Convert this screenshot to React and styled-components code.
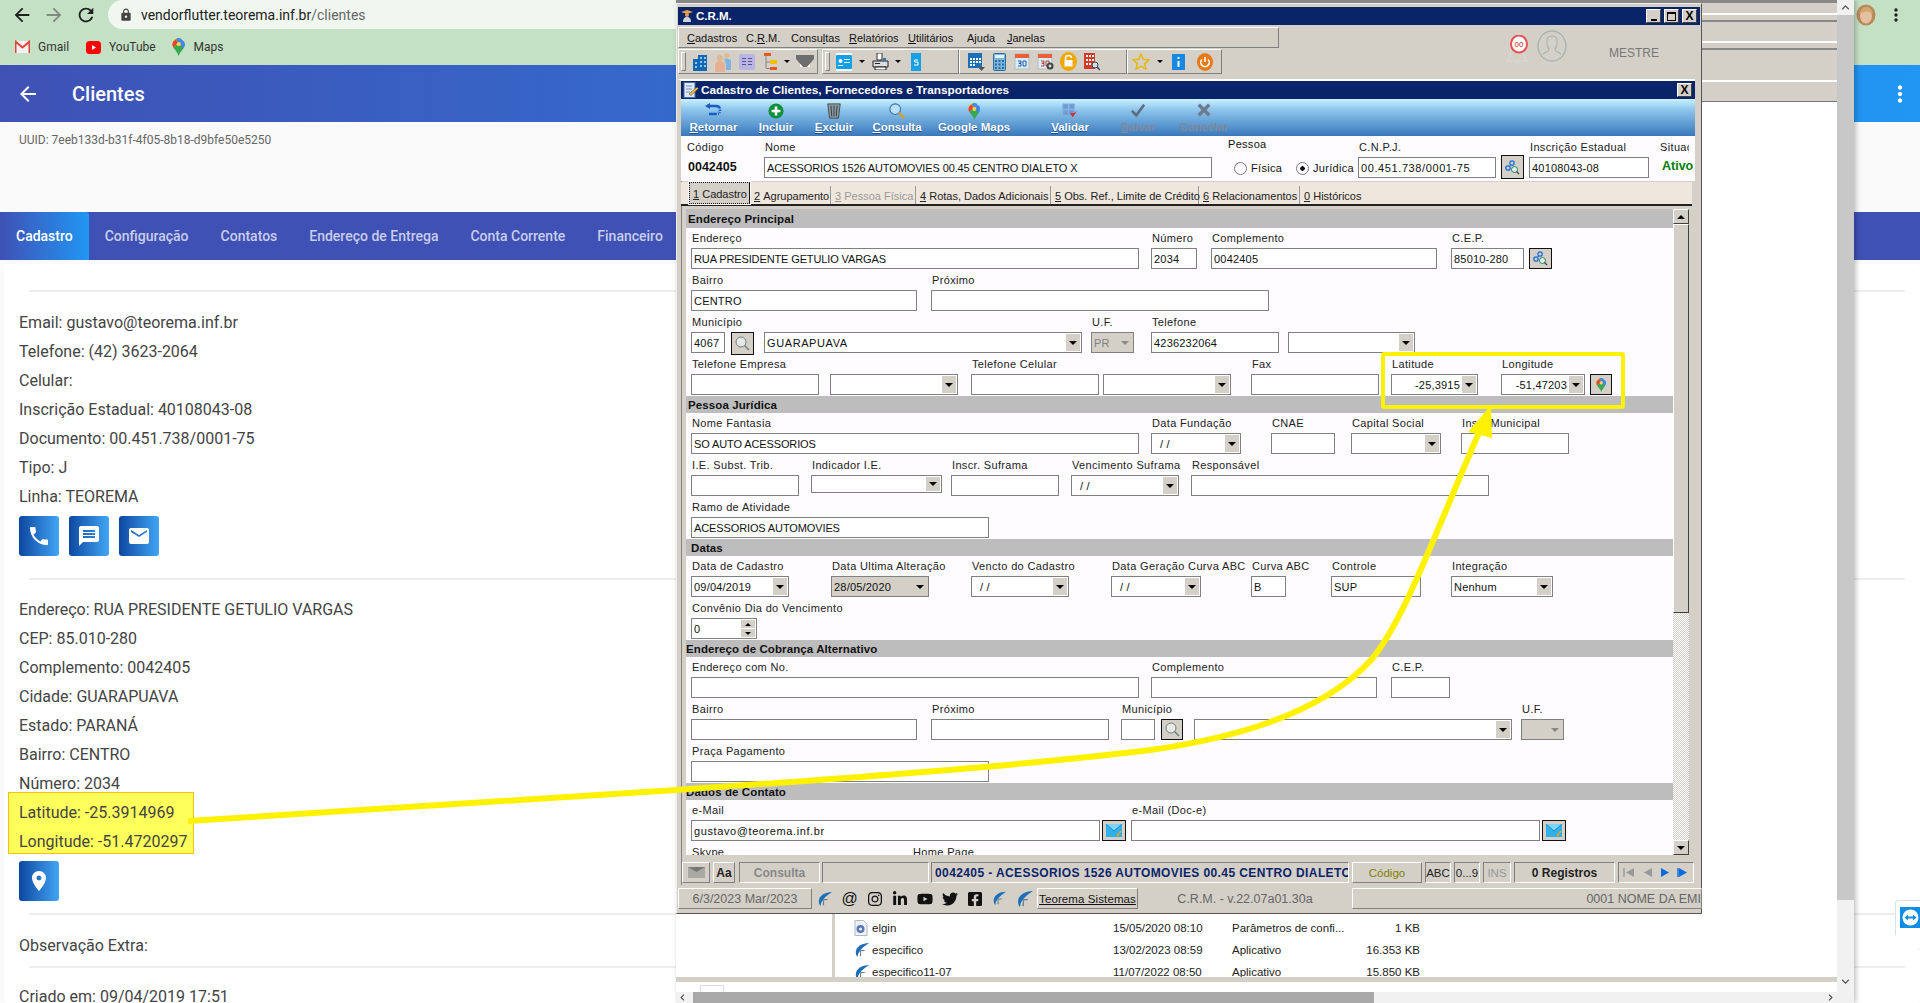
import React from "react";
import styled, { createGlobalStyle } from "styled-components";
import {
  MdArrowBack,
  MdArrowForward,
  MdRefresh,
  MdLock,
  MdMoreVert,
  MdPhone,
  MdMessage,
  MdEmail,
  MdPlace,
  MdKeyboardArrowUp,
  MdKeyboardArrowDown,
  MdKeyboardArrowLeft,
  MdKeyboardArrowRight,
} from "react-icons/md";
import { FaInstagram, FaLinkedinIn, FaYoutube, FaTwitter, FaFacebookSquare } from "react-icons/fa";

const GlobalStyle = createGlobalStyle`
  html, body {
    margin: 0;
    padding: 0;
    overflow: hidden;
    background: #fafafa;
  }
  * {
    box-sizing: border-box;
  }
`;

const Desktop = styled.div`
  position: relative;
  width: 1920px;
  height: 1003px;
  overflow: hidden;
  font-family: Roboto, "Liberation Sans", sans-serif;
`;

/* ---------- browser page ---------- */

const ChromeBar = styled.div`
  height: 65px;
  background: #c5e1c5;
  display: flex;
  flex-direction: column;
`;

const ChromeRow = styled.div`
  height: 29px;
  display: flex;
  align-items: center;
  padding-left: 11px;
  color: #222;
`;

const NavSlot = styled.span`
  width: 32px;
  display: flex;
  font-size: 22px;
  color: ${(p) => (p.$dim ? "#7d8a7d" : "#1f1f1f")};
`;

const UrlPill = styled.div`
  flex: 1;
  height: 29px;
  margin-left: 1px;
  background: #f0f7f0;
  border-radius: 15px;
  display: flex;
  align-items: center;
  padding-left: 11px;
  font-size: 14px;
  color: #222;
  svg {
    color: #444;
    margin-right: 8px;
    font-size: 14px;
  }
  span {
    color: #666;
  }
`;

const ChromeEnd = styled.div`
  width: 66px;
  display: flex;
  align-items: center;
  padding-left: 2px;
  color: #222;
  font-size: 20px;
  svg:last-child {
    margin-left: 10px;
  }
`;

const Bookmarks = styled.div`
  display: flex;
  align-items: center;
  height: 36px;
  padding-left: 15px;
  font-size: 12px;
  color: #333;
`;

const Bookmark = styled.div`
  width: ${(p) => p.$w}px;
  display: flex;
  align-items: center;
  gap: 8px;
`;

const AppBar = styled.div`
  height: 57px;
  background: linear-gradient(90deg, #3f51b5, #2196f3);
  display: flex;
  align-items: center;
  padding-left: 16px;
  color: #fff;
  position: relative;
`;

const BackIcon = styled(MdArrowBack)`
  font-size: 24px;
  margin-right: 32px;
`;

const AppTitle = styled.div`
  font-size: 20px;
  font-weight: 500;
  flex: 1;
`;

const AppMenu = styled(MdMoreVert)`
  font-size: 26px;
  margin-right: 7px;
`;

const UuidBox = styled.div`
  height: 90px;
  padding: 11px 19px;
  background: #fafafa;
  font-size: 12px;
  line-height: 14px;
  color: #666;
`;

const TabBar = styled.div`
  height: 48px;
  background: #3f51b5;
  display: flex;
`;

const Tab = styled.div`
  padding: 0 16px;
  display: flex;
  align-items: center;
  font-size: 14px;
  font-weight: 500;
  color: ${(p) => (p.$active ? "#fff" : "rgba(255,255,255,.72)")};
  background: ${(p) => (p.$active ? "linear-gradient(90deg,#3f51b5,#2196f3)" : "none")};
  border-top-right-radius: 3px;
`;

const Card = styled.div`
  margin: 4px 0 0 4px;
  height: 739px;
  background: #fff;
  border-radius: 4px;
  padding: 26px 15px 0;
  color: #444;
  font-size: 16px;
`;

const Rule = styled.div`
  height: 2px;
  background: #eee;
  margin: ${(p) => p.$top}px 0 ${(p) => p.$bottom}px 10px;
`;

const InfoLine = styled.div`
  height: 29px;
  line-height: 29px;
  position: relative;
  z-index: 1;
`;

const Highlight = styled.div`
  position: relative;
  &::before {
    content: "";
    position: absolute;
    left: -11px;
    top: -6px;
    width: 184px;
    height: 60px;
    background: #ffff5c;
    border: 1px solid #f4c20d;
  }
`;

const ActionRow = styled.div`
  display: flex;
  gap: 10px;
  margin-top: 5px;
`;

const ActionButton = styled.div`
  width: 40px;
  height: 40px;
  border-radius: 3px;
  background: linear-gradient(90deg, #0d47a1, #42a5f5);
  color: #fff;
  font-size: 24px;
  display: flex;
  align-items: center;
  justify-content: center;
`;

const TeamTab = styled.div`
  position: absolute;
  right: 0;
  top: 900px;
  width: 25px;
  height: 50px;
  background: #fff;
  border: 1px solid #cfe3f5;
  border-right: none;
  border-radius: 3px 0 0 0;
  clip-path: polygon(0 0, 100% 0, 100% 100%, 0 70%);
  padding: 6px 0 0 4px;
`;

const TeamSquare = styled.div`
  width: 21px;
  height: 21px;
  background: #0e8ee9;
  display: flex;
  align-items: center;
  justify-content: center;
`;

/* ---------- explorer behind the C.R.M. window ---------- */

const Explorer = styled.div`
  position: absolute;
  left: 676px;
  top: 0;
  width: 1178px;
  height: 1003px;
  z-index: 1;
  display: flex;
  background: #fff;
  box-shadow: 2px 0 5px rgba(0, 0, 0, 0.25);
`;

const ExplorerMain = styled.div`
  flex: 1;
  display: flex;
  flex-direction: column;
  min-width: 0;
`;

const ExplorerBands = styled.div`
  height: 102px;
  background: #d4d0c8;
  border-top: 3px solid #888;
  border-bottom: 1px solid #777;
  display: flex;
  flex-direction: column;
  justify-content: flex-start;
`;

const BandLine = styled.div`
  height: 2px;
  background: ${(p) => p.$c};
  margin-top: ${(p) => p.$top}px;
`;

const ExplorerBody = styled.div`
  flex: 1;
  display: flex;
  align-items: flex-end;
  overflow: hidden;
`;

const ExplorerPane = styled.div`
  width: 159px;
  height: 100%;
  border-right: 3px solid #d4d0c8;
  flex: none;
`;

const FileList = styled.div`
  flex: 1;
  margin-bottom: -6px;
`;

const FileRow = styled.div`
  height: 22px;
  display: flex;
  align-items: center;
  font-family: "Liberation Sans", sans-serif;
  font-size: 11.5px;
  color: #222;
  padding-left: 19px;
`;

const FileName = styled.div`
  width: 259px;
  display: flex;
  align-items: center;
`;

const FileIcon = styled.div`
  width: 18px;
  flex: none;
  display: flex;
`;

const FileDate = styled.div`
  width: 119px;
`;

const FileType = styled.div`
  width: 120px;
`;

const FileSize = styled.div`
  width: 68px;
  text-align: right;
`;

const ExplorerHScroll = styled.div`
  height: 5px;
  background: #d4d0c8;
  flex: none;
`;

const ExplorerGap = styled.div`
  height: 10px;
  background: #fff;
  flex: none;
  padding: 3px 0 0 24px;
  overflow: hidden;
`;

const CutPage = styled.div`
  width: 24px;
  height: 12px;
  border: 1px solid #ddd;
  border-bottom: none;
`;

const BrowserHScroll = styled.div`
  height: 11px;
  background: #f1f1f1;
  flex: none;
  display: flex;
  align-items: center;
  color: #444;
  font-size: 13px;
`;

const HThumb = styled.div`
  height: 11px;
  width: 681px;
  margin-left: 4px;
  background: #a8a8a8;
`;

const HSpacer = styled.div`
  flex: 1;
`;

const ExplorerVScroll = styled.div`
  width: 17px;
  background: #f1f1f1;
  display: flex;
  flex-direction: column;
  align-items: center;
  flex: none;
  color: #555;
  font-size: 15px;
  padding-bottom: 12px;
`;

const VThumb = styled.div`
  width: 100%;
  height: 885px;
  background: #c8c8c8;
  margin-bottom: 74px;
`;

/* ---------- C.R.M. window ---------- */

const CrmWindow = styled.div`
  position: absolute;
  left: 676px;
  top: 3px;
  width: 1026px;
  height: 911px;
  z-index: 2;
  background: #d4d0c8;
  border: 1px solid #555;
  border-top-color: #eee;
  border-left-color: #eee;
  padding: 3px 1px 0 1px;
  display: flex;
  flex-direction: column;
  font-family: "Liberation Sans", Arial, sans-serif;
  font-size: 11px;
  color: #111;
`;

const TitleBar = styled.div`
  height: ${(p) => p.$h}px;
  flex: none;
  background: #0a246a;
  color: #fff;
  font-weight: 700;
  font-size: ${(p) => p.$size}px;
  display: flex;
  align-items: center;
  padding: 0 ${(p) => p.$right}px 0 2px;
  gap: 2px;
`;

const TitleSpacer = styled.div`
  flex: 1;
`;

const CaptionButton = styled.div`
  width: 15px;
  height: 14px;
  margin-left: 1px;
  background: #d4d0c8;
  border: 1px solid;
  border-color: #fff #404040 #404040 #fff;
  display: flex;
  align-items: center;
  justify-content: center;
  color: #000;
  font-size: 12px;
  font-weight: 700;
  line-height: 1;
`;

const MaxGlyph = styled.div`
  width: 9px;
  height: 9px;
  border: 1px solid #000;
  border-top-width: 2px;
`;

const MinGlyph = styled.div`
  width: 6px;
  height: 2px;
  background: #000;
  margin-top: 7px;
`;

const CrmHeader = styled.div`
  height: 47px;
  margin: 2px 0 5px;
  flex: none;
  display: flex;
`;

const BarsColumn = styled.div`
  width: 601px;
  display: flex;
  flex-direction: column;
`;

const MenuBar = styled.div`
  height: 21px;
  display: flex;
  align-items: center;
  padding-left: 8px;
  border: 1px solid;
  border-color: #fff #808080 #808080 #fff;
  font-size: 11px;
`;

const MenuItem = styled.div`
  width: ${(p) => p.$w}px;
  flex: none;
`;

const ToolStrip = styled.div`
  height: 25px;
  margin-top: 1px;
  display: flex;
`;

const ToolGroup = styled.div`
  position: relative;
  width: ${(p) => p.$w}px;
  margin-left: ${(p) => p.$ml || 0}px;
  flex: none;
  display: flex;
  align-items: center;
  padding-left: ${(p) => p.$pad}px;
  border: 1px solid;
  border-color: #fff #808080 #808080 #fff;
  &::before {
    content: ${(p) => (p.$grip ? '""' : "none")};
    position: absolute;
    left: 2px;
    top: 2px;
    bottom: 2px;
    width: 3px;
    border: 1px solid;
    border-color: #fff #808080 #808080 #fff;
  }
`;

const ToolSlot = styled.div`
  width: ${(p) => p.$w}px;
  flex: none;
  display: flex;
  align-items: center;
  justify-content: center;
`;

const Caret = styled.div`
  width: 0;
  height: 0;
  border-left: 3px solid transparent;
  border-right: 3px solid transparent;
  border-top: 3px solid #000;
`;

const UserArea = styled.div`
  flex: 1;
  display: flex;
  align-items: flex-start;
  padding: 8px 0 0 224px;
`;

const RingSlot = styled.div`
  margin: -5px 0 0 6px;
`;

const Mestre = styled.div`
  margin: 11px 0 0 42px;
  font-size: 12px;
  color: #777;
`;

const InnerWindow = styled.div`
  height: 806px;
  margin-right: 5px;
  flex: none;
  border-top: 2px solid #fff;
  border-left: 3px solid #d4d0c8;
  box-shadow: inset 1px 0 #808080;
  display: flex;
  flex-direction: column;
  background: #d4d0c8;
`;

const ActionBar = styled.div`
  height: 37px;
  flex: none;
  display: flex;
  background: linear-gradient(180deg, #c8f0ff 0%, #8cc4ec 30%, #3a78bc 100%);
`;

const ActionItem = styled.div`
  width: ${(p) => p.$w}px;
  flex: none;
  display: flex;
  flex-direction: column;
  align-items: center;
  font-weight: 700;
  font-size: 11.5px;
  line-height: 14px;
  padding-top: 4px;
  color: ${(p) => (p.$off ? "#7e8a98" : "#fff")};
  text-shadow: ${(p) => (p.$off ? "none" : "0 1px 1px rgba(0,30,80,.5)")};
`;

const ActionIcon = styled.div`
  height: 17px;
`;

const HeadRow = styled.div`
  height: 45px;
  flex: none;
  background: #fffcff;
  display: flex;
  padding: 1px 0 0 5px;
  overflow: hidden;
`;

const Field = styled.div`
  width: ${(p) => p.$w}px;
  margin-left: ${(p) => p.$ml || 0}px;
  flex: none;
`;

const FieldLabel = styled.div`
  height: 20px;
  line-height: 21px;
  padding-left: 1px;
  white-space: nowrap;
  letter-spacing: 0.35px;
  color: #222;
  overflow: ${(p) => (p.$clip ? "hidden" : "visible")};
`;

const spacing = { tight: "-0.12px", wide: "0.6px" };

const InputBox = styled.div`
  height: ${(p) => p.$h || 21}px;
  border: 1px solid #808080;
  background: ${(p) => (p.$off ? "#d4d0c8" : "#fff")};
  display: flex;
  align-items: center;
  padding: 0 1px 0 2px;
  white-space: nowrap;
  overflow: hidden;
  letter-spacing: ${(p) => spacing[p.$spread] || "0.2px"};
  color: ${(p) => (p.$muted ? "#808080" : "#111")};
`;

const InputText = styled.div`
  flex: 1;
  text-align: ${(p) => (p.$right ? "right" : "left")};
  padding-right: ${(p) => (p.$right ? "2px" : "0")};
  padding-left: ${(p) => p.$indent || 0}px;
`;

const DropArrow = styled.div`
  width: 14px;
  align-self: stretch;
  margin: 1px 0;
  background: ${(p) => (p.$flat ? "transparent" : "#d4d0c8")};
  display: flex;
  align-items: center;
  justify-content: center;
  flex: none;
  &::after {
    content: "";
    border-left: 4px solid transparent;
    border-right: 4px solid transparent;
    border-top: 4px solid ${(p) => (p.$grey ? "#888" : "#000")};
  }
`;

const Spinner = styled.div`
  width: 14px;
  align-self: stretch;
  flex: none;
  display: flex;
  flex-direction: column;
  gap: 1px;
  margin: 1px 0;
`;

const SpinPart = styled.div`
  flex: 1;
  background: #d4d0c8;
  display: flex;
  align-items: center;
  justify-content: center;
  &::after {
    content: "";
    border-left: 3px solid transparent;
    border-right: 3px solid transparent;
    ${(p) => (p.$up ? "border-bottom: 3px solid #000;" : "border-top: 3px solid #000;")}
  }
`;

const IconButton = styled.div`
  height: ${(p) => p.$h || 21}px;
  margin-top: ${(p) => p.$top || 0}px;
  background: #d4d0c8;
  border: 1px solid #111;
  display: flex;
  align-items: center;
  justify-content: center;
`;

const Radio = styled.div`
  display: flex;
  align-items: center;
  gap: 4px;
  width: ${(p) => p.$w}px;
  letter-spacing: 0.3px;
  &::before {
    content: "";
    width: 11px;
    height: 11px;
    border-radius: 50%;
    border: 1px solid #777;
    background: ${(p) => (p.$on ? "radial-gradient(circle,#111 0 2px,#fff 2.5px)" : "#fff")};
  }
`;

const RadioRow = styled.div`
  display: flex;
  margin-top: 6px;
  padding-left: 6px;
  height: 16px;
`;

const PersonLabel = styled.div`
  height: 17px;
  line-height: 14px;
  letter-spacing: 0.3px;
`;

const StatusText = styled.div`
  color: #008000;
  font-weight: 700;
  font-size: 12.5px;
  padding: 2px 0 0 3px;
  white-space: nowrap;
`;

const CodeValue = styled.div`
  font-weight: 700;
  font-size: 12.5px;
  padding: 3px 0 0 2px;
`;

const TabStrip = styled.div`
  height: 24px;
  margin-top: 1px;
  flex: none;
  background: #efe7de;
  border-bottom: 2px solid #222;
  display: flex;
  align-items: flex-end;
  padding: 0 0 0 8px;
  font-size: 11px;
  margin-right: 3px;
`;

const FormTab = styled.div`
  width: ${(p) => p.$w}px;
  height: ${(p) => (p.$active ? "22px" : "18px")};
  flex: none;
  display: flex;
  align-items: center;
  padding: 2px 0 0 ${(p) => (p.$active ? "3px" : "4px")};
  white-space: nowrap;
  color: ${(p) => (p.$off ? "#999" : "#222")};
  border: ${(p) => (p.$active ? "1px dotted #111" : "none")};
  border-right: ${(p) => (p.$active ? "1px solid #111" : p.$last ? "none" : "1px solid #999")};
  background: ${(p) => (p.$active ? "#d4d0c8" : "transparent")};
  outline: ${(p) => (p.$active ? "1px solid #fff" : "none")};
`;

const FormArea = styled.div`
  height: 651px;
  flex: none;
  display: flex;
  padding: 3px 6px 0 5px;
`;

const FormScroll = styled.div`
  flex: 1;
  height: 646px;
  overflow: hidden;
  background: #fffcff;
`;

const SectionBand = styled.div`
  height: ${(p) => p.$h || 17}px;
  padding-left: ${(p) => p.$pad}px;
  background: #bdbdbd;
  display: flex;
  align-items: center;
  font-weight: 700;
  font-size: 11.5px;
  letter-spacing: 0.1px;
  color: #111;
`;

const FormRow = styled.div`
  height: 42px;
  padding-left: 5px;
  display: flex;
`;

const VScroll = styled.div`
  width: 16px;
  height: 646px;
  flex: none;
  display: flex;
  flex-direction: column;
  background: repeating-conic-gradient(#d4d0c8 0 25%, #fff 0 50%) 0 0 / 2px 2px;
`;

const VScrollButton = styled.div`
  height: 15px;
  flex: none;
  background: #d4d0c8;
  border: 1px solid;
  border-color: #fff #404040 #404040 #fff;
  display: flex;
  align-items: center;
  justify-content: center;
  &::after {
    content: "";
    border-left: 4px solid transparent;
    border-right: 4px solid transparent;
    ${(p) => (p.$up ? "border-bottom: 4px solid #000;" : "border-top: 4px solid #000;")}
  }
`;

const VScrollThumb = styled.div`
  height: 389px;
  flex: none;
  background: #d4d0c8;
  border: 1px solid;
  border-color: #fff #404040 #404040 #fff;
  margin-bottom: auto;
`;

const RecordBar = styled.div`
  height: 21px;
  margin-top: 5px;
  padding-left: 1px;
  flex: none;
  display: flex;
`;

const RecordCell = styled.div`
  width: ${(p) => p.$w}px;
  margin-left: ${(p) => p.$ml || 0}px;
  flex: none;
  border: 1px solid;
  border-color: ${(p) => (p.$raised ? "#fff #808080 #808080 #fff" : "#808080 #fff #fff #808080")};
  display: flex;
  align-items: center;
  justify-content: center;
  white-space: nowrap;
  overflow: hidden;
  font-size: ${(p) => p.$size || 11.5}px;
  font-weight: ${(p) => (p.$bold ? 700 : 400)};
  color: ${(p) => p.$color || "#222"};
`;

const RecordName = styled(RecordCell)`
  justify-content: flex-start;
  padding-left: 3px;
  letter-spacing: 0.4px;
`;

const NavGlyph = styled.div`
  width: 18px;
  display: flex;
  justify-content: center;
`;

const FootBar = styled.div`
  height: 21px;
  margin-top: 3px;
  flex: none;
  display: flex;
  align-items: center;
  font-size: 12.5px;
  color: #666;
`;

const FootCell = styled.div`
  width: ${(p) => p.$w}px;
  height: 21px;
  flex: none;
  border: 1px solid;
  border-color: ${(p) => (p.$flat ? "transparent" : "#fff #808080 #808080 #fff")};
  display: flex;
  align-items: center;
  justify-content: ${(p) => p.$align || "center"};
  white-space: nowrap;
  overflow: hidden;
`;

const SocialSlot = styled.div`
  width: 25px;
  flex: none;
  display: flex;
  justify-content: center;
  color: #111;
  font-size: 16px;
`;

const TeoremaLink = styled.div`
  color: #111;
  text-decoration: underline;
  font-size: 11.5px;
  letter-spacing: 0.1px;
`;

const Annotation = styled.svg`
  position: absolute;
  left: 0;
  top: 0;
  z-index: 3;
  pointer-events: none;
`;

/* ---------- drawings ---------- */

const Gmail = () => (
  <svg width="15" height="14" viewBox="0 0 15 14">
    <rect x="0.5" y="1" width="14" height="12" fill="#f4f4f4" />
    <path d="M0.5 13V1.5L7.5 7.5L14.5 1.5V13" fill="none" stroke="#e8433a" strokeWidth="2" />
  </svg>
);

const YouTube = () => (
  <svg width="15" height="13" viewBox="0 0 15 13">
    <rect width="15" height="13" rx="3.5" fill="#f00" />
    <path d="M6 4L10 6.5L6 9Z" fill="#fff" />
  </svg>
);

const MapsPin = ({ size = 20 }) => (
  <svg width={size * 0.75} height={size} viewBox="0 0 15 20">
    <path d="M7.5 0C3.4 0 0.5 3 0.5 7C0.5 8.5 1 9.7 1.6 10.7L11 2Q9.5 0 7.5 0Z" fill="#f4b400" />
    <path d="M1.6 10.7L7 5.5L3.8 2Q0.5 4 0.5 7C0.5 8.5 1 9.7 1.6 10.7Z" fill="#ea4335" />
    <path d="M4 2Q5.5 0 7.5 0Q10 0 11.5 2.5L9 5Q8 4 7 4.5Z" fill="#4285f4" />
    <path d="M11.3 2.3Q14.5 4 14.5 7C14.5 9 13.5 10.5 12.5 12L8 7.5Q9.5 6 9 5Z" fill="#4285f4" />
    <path d="M1.6 10.7L6 6.5Q7 9 9.5 7L12.5 12C10.5 14.5 8.5 16.5 7.5 20C6.5 16.5 4 14 1.6 10.7Z" fill="#34a853" />
    <circle cx="7.5" cy="7" r="2.3" fill="#fbd34d" />
  </svg>
);

const Avatar = () => (
  <svg width="20" height="22" viewBox="0 0 20 22">
    <ellipse cx="10" cy="11" rx="9.5" ry="10.5" fill="#b88a5a" />
    <ellipse cx="10" cy="12" rx="6" ry="7.5" fill="#e6c0a0" />
    <path d="M3 10Q5 2 12 3Q16 5 17 10Q12 5 3 10Z" fill="#d0a870" />
  </svg>
);

const Swoosh = ({ size = 18 }) => (
  <svg width={size} height={size} viewBox="0 0 18 18">
    <path d="M17 1C9 1 2 5 2 12Q2 15 4 17Q4 9 17 1Z" fill="#1d6fb8" />
    <path d="M7 9H12V10L8 10.5V16H6.5Z" fill="#6d7f8e" />
  </svg>
);

const CrmLogo = () => (
  <svg width="14" height="14" viewBox="0 0 14 14">
    <path d="M1 3L7 1L13 3L7 5Z" fill="#e8a040" />
    <circle cx="7" cy="6" r="2" fill="#d89868" />
    <path d="M3 13Q3 8 7 8Q11 8 11 13Z" fill="#ccd4dc" />
  </svg>
);

const DocPen = () => (
  <svg width="16" height="16" viewBox="0 0 16 16">
    <rect x="1" y="0.5" width="11" height="15" fill="#dfe8f6" stroke="#4868a8" />
    <path d="M3 4h6M3 7h6M3 10h4" stroke="#7890c0" />
    <path d="M6 12L14 5L15.5 6.5L8 13.5Z" fill="#f0c040" stroke="#333" strokeWidth="0.5" />
  </svg>
);

const Building = () => (
  <svg width="14" height="18" viewBox="0 0 14 18">
    <path d="M0 6H5V2H14V18H0Z" fill="#1268b4" />
    <path d="M7 4h2v2H7zM11 4h2v2h-2zM7 8h2v2H7zM11 8h2v2h-2zM7 12h2v2H7zM11 12h2v2h-2zM2 9h2v2H2zM2 13h2v2H2z" fill="#8cc8f0" />
  </svg>
);

const People = () => (
  <svg width="18" height="20" viewBox="0 0 18 20">
    <circle cx="6" cy="6" r="3" fill="#e0b890" />
    <circle cx="13" cy="3.5" r="2.5" fill="#e0b890" />
    <path d="M1 20V12Q2 9 6 9Q10 9 11 12V20Z" fill="#e8b090" />
    <path d="M10 7Q13 5.5 17 8V18H12V12Z" fill="#80b4e0" />
  </svg>
);

const ListWindow = () => (
  <svg width="16" height="16" viewBox="0 0 16 16">
    <rect width="16" height="16" rx="2" fill="#b8b4e4" />
    <path d="M3 4h4v1H3zM9 4h4v1H9zM3 7h4v1H3zM9 7h4v1H9zM3 10h4v1H3zM9 10h4v1H9z" fill="#55558c" />
  </svg>
);

const TreeIcon = () => (
  <svg width="13" height="18" viewBox="0 0 13 18">
    <rect x="0" y="0" width="7" height="3" fill="#e85a20" />
    <rect x="6" y="7" width="7" height="4" fill="#f4c000" />
    <rect x="6" y="14" width="7" height="3" fill="#e85a20" />
    <path d="M2 3V15.5H6M2 9H6" fill="none" stroke="#888" />
  </svg>
);

const GreyMail = () => (
  <svg width="18" height="14" viewBox="0 0 18 14">
    <path d="M0 0H18V4L11 12H7L0 4Z" fill="#6e6e6e" />
    <path d="M7 12H11L14 9V12H4V9Z" fill="#fff" />
  </svg>
);

const CardIcon = () => (
  <svg width="16" height="18" viewBox="0 0 16 18">
    <rect width="16" height="18" fill="#fff" />
    <rect y="2" width="16" height="14" rx="1" fill="#12a0e8" />
    <circle cx="4.5" cy="8" r="2" fill="#fff" />
    <path d="M8 6h6v1H8zM8 9h6v1H8zM2 12h5v1H2z" fill="#fff" />
  </svg>
);

const Printer = () => (
  <svg width="17" height="17" viewBox="0 0 17 17">
    <path d="M5 0H10V7H5Z" fill="#fff" stroke="#333" />
    <path d="M1 8H16V14H1Z" fill="#ddd" stroke="#222" />
    <path d="M3 14H14V17H3Z" fill="#fff" stroke="#222" />
    <path d="M11 5H14V8H11Z" fill="#2a7ab8" />
    <path d="M3 10h5v1H3z" fill="#222" />
  </svg>
);

const BlueDoc = () => (
  <svg width="10" height="18" viewBox="0 0 10 18">
    <rect width="10" height="18" fill="#18a0e4" />
    <path d="M7 7H3.5V9H7V12H3" fill="none" stroke="#fff" />
  </svg>
);

const CalendarBlue = () => (
  <svg width="17" height="18" viewBox="0 0 17 18">
    <rect width="14" height="15" fill="#1a70b8" />
    <path d="M2 5h2v2H2zM5 5h2v2H5zM8 5h2v2H8zM11 5h2v2h-2zM2 8h2v2H2zM5 8h2v2H5zM8 8h2v2H8zM11 8h2v2h-2zM2 11h2v2H2zM5 11h2v2H5z" fill="#fff" />
    <path d="M10 14H17L13.5 18Z" fill="#555" />
  </svg>
);

const Calculator = () => (
  <svg width="13" height="18" viewBox="0 0 13 18">
    <rect x="0.5" y="0.5" width="12" height="17" rx="1" fill="#7cb4dc" stroke="#2a6ca4" />
    <rect x="2" y="2" width="9" height="3" fill="#e4f2fa" />
    <path d="M2 7h2v2H2zM5.5 7h2v2h-2zM9 7h2v2H9zM2 10.5h2v2H2zM5.5 10.5h2v2h-2zM9 10.5h2v2H9zM2 14h2v2H2zM5.5 14h2v2h-2zM9 14h2v2H9z" fill="#2a6ca4" />
  </svg>
);

const CalendarDay = ({ gear }) => (
  <svg width="18" height="18" viewBox="0 0 18 18">
    <rect x="1" y="1" width="14" height="15" fill="#d6ecf6" stroke="#bbb" />
    <rect x="1" y="1" width="14" height="4" fill="#e8603c" />
    <path d="M4 8H7V10H5V10.5H7V13H4M9 8H12V13H9Z" fill="none" stroke={gear ? "#c04030" : "#2458a8"} strokeWidth="1" />
    {gear && <circle cx="13" cy="13" r="3.5" fill="#444" />}
    {gear && <circle cx="13" cy="13" r="1.4" fill="#ddd" />}
  </svg>
);

const LockOrange = () => (
  <svg width="17" height="19" viewBox="0 0 17 19">
    <ellipse cx="8.5" cy="9.5" rx="8.5" ry="9.5" fill="#f0a800" />
    <path d="M5.5 8V6Q5.5 3.5 8.5 3.5Q11.5 3.5 11.5 6" fill="none" stroke="#fff" strokeWidth="1.5" />
    <rect x="4.5" y="8" width="8" height="6.5" fill="#fff" />
  </svg>
);

const RedBuilding = () => (
  <svg width="16" height="18" viewBox="0 0 16 18">
    <rect width="11" height="16" fill="#d43a28" />
    <path d="M2 2h2v2H2zM5 2h2v2H5zM8 2h2v2H8zM2 6h2v2H2zM5 6h2v2H5zM8 6h2v2H8zM2 10h2v2H2zM5 10h2v2H5z" fill="#fff" />
    <circle cx="11" cy="12" r="3" fill="#cde" stroke="#445" />
    <path d="M13 14L16 17" stroke="#445" strokeWidth="1.5" />
  </svg>
);

const Star = () => (
  <svg width="18" height="17" viewBox="0 0 18 17">
    <path d="M9 1L11.3 6.3L17 6.8L12.7 10.6L14 16.2L9 13.3L4 16.2L5.3 10.6L1 6.8L6.7 6.3Z" fill="none" stroke="#e8b800" strokeWidth="1.5" />
  </svg>
);

const InfoBlue = () => (
  <svg width="13" height="16" viewBox="0 0 13 16">
    <rect width="13" height="16" fill="#1888e0" />
    <path d="M5.5 3h2v2h-2zM5.5 7h2v6h-2z" fill="#fff" />
  </svg>
);

const PowerOrange = () => (
  <svg width="16" height="18" viewBox="0 0 16 18">
    <ellipse cx="8" cy="9" rx="8" ry="9" fill="#e87818" />
    <path d="M5 6.5A4.2 4.2 0 1 0 11 6.5M8 4V9" fill="none" stroke="#fff" strokeWidth="1.6" />
  </svg>
);

const BellBadge = () => (
  <svg width="28" height="34" viewBox="0 0 28 34">
    <path d="M4 26Q8 22 8 12Q8 6 14 6Q20 6 20 12Q20 22 24 26Z M11 26Q14 31 17 26" fill="none" stroke="#d8d8d4" strokeWidth="1.2" />
    <ellipse cx="16" cy="9" rx="8" ry="8.5" fill="#fff" stroke="#e85050" strokeWidth="2" />
    <text x="16" y="12" textAnchor="middle" fontSize="8" fill="#d02020" fontFamily="Liberation Sans">00</text>
  </svg>
);

const UserRing = () => (
  <svg width="30" height="32" viewBox="0 0 30 32">
    <ellipse cx="15" cy="16" rx="14" ry="15" fill="none" stroke="#a8b4b4" strokeWidth="1.4" />
    <path d="M15 6Q9 6 10 13Q10 17 12 19Q12 21 6 24M15 6Q21 6 20 13Q20 17 18 19Q18 21 24 24" fill="none" stroke="#a8b4b4" strokeWidth="1.2" />
  </svg>
);

const Retornar = () => (
  <svg width="17" height="14" viewBox="0 0 17 14">
    <path d="M3 3H11Q15 3 15 7Q15 11 11 11H4" fill="none" stroke="#1a5cc0" strokeWidth="2.6" strokeDasharray="13 1 1 1 1 1 1 1" />
    <path d="M0 3L5 0V6Z" fill="#1a5cc0" />
  </svg>
);

const Incluir = () => (
  <svg width="16" height="16" viewBox="0 0 18 18">
    <circle cx="9" cy="9" r="8.5" fill="#0d8f3c" />
    <path d="M9 4V14M4 9H14" stroke="#fff" strokeWidth="3" />
  </svg>
);

const Excluir = () => (
  <svg width="14" height="16" viewBox="0 0 15 18">
    <path d="M0.5 1H14.5L12.5 17H2.5Z" fill="#8a9aa4" stroke="#444" />
    <path d="M4 3L5 15M7.5 3V15M11 3L10 15" stroke="#333" />
  </svg>
);

const Consulta = () => (
  <svg width="16" height="16" viewBox="0 0 18 18">
    <circle cx="7" cy="7" r="6" fill="#b8e0f8" stroke="#3a70b0" strokeWidth="1.2" />
    <path d="M11 11L17 17" stroke="#d8a020" strokeWidth="2.5" />
  </svg>
);

const Validar = () => (
  <svg width="16" height="16" viewBox="0 0 18 18">
    <path d="M1 1h6v6H1zM8 1h6v6H8zM1 8h6v6H1z" fill="#6b9cd8" stroke="#88b0e0" />
    <path d="M8 8h6v6H8z" fill="#6b9cd8" />
    <path d="M9 11L12 16L17 9L13 11.5Z" fill="#d83020" />
  </svg>
);

const Salvar = () => (
  <svg width="14" height="14" viewBox="0 0 16 16">
    <path d="M1 9L6 14L15 2" fill="none" stroke="#5c6c7c" strokeWidth="3" />
  </svg>
);

const Cancelar = () => (
  <svg width="14" height="14" viewBox="0 0 16 16">
    <path d="M2 2L14 14M14 2L2 14" stroke="#6c7c8c" strokeWidth="4" />
  </svg>
);

const Loupe = () => (
  <svg width="15" height="15" viewBox="0 0 15 15">
    <circle cx="6" cy="6" r="5" fill="#e8e8e4" stroke="#708080" />
    <path d="M9.5 9.5L14 14" stroke="#708080" strokeWidth="1.4" />
  </svg>
);

const LinkLoupe = () => (
  <svg width="15" height="15" viewBox="0 0 15 15">
    <circle cx="3" cy="8" r="2.2" fill="none" stroke="#1c70d8" strokeWidth="1.3" />
    <circle cx="7" cy="3" r="2.2" fill="none" stroke="#1c70d8" strokeWidth="1.3" />
    <path d="M4.5 6.5L6 4.5" stroke="#1c70d8" />
    <circle cx="9.5" cy="9.5" r="3" fill="#e0f0e8" stroke="#208860" />
    <path d="M11.5 11.5L14 14" stroke="#444" strokeWidth="1.3" />
  </svg>
);

const BlueMail = () => (
  <svg width="16" height="13" viewBox="0 0 16 13">
    <rect width="16" height="13" fill="#30b0e8" />
    <path d="M0 0L8 7L16 0" fill="#7ad4f8" stroke="#1878c0" strokeWidth="0.8" />
    <path d="M11 12L15 7" stroke="#e8a020" strokeWidth="1.6" />
  </svg>
);

const MailFlat = () => (
  <svg width="17" height="11" viewBox="0 0 17 11">
    <rect width="17" height="11" fill="#a8a8a4" />
    <path d="M0 0L8.5 5L17 0Z" fill="#777" />
  </svg>
);

const FileGear = () => (
  <svg width="14" height="16" viewBox="0 0 14 16">
    <path d="M1 0.5H9.5L13 4V15.5H1Z" fill="#eef2f8" stroke="#b0b8c4" />
    <circle cx="6.5" cy="9" r="4" fill="#5a78b8" />
    <circle cx="6.5" cy="9" r="1.5" fill="#eef2f8" />
  </svg>
);

const Triangle = ({ left, color = "#0a6ce0", bar }) => (
  <svg width="12" height="11" viewBox="0 0 12 11">
    <path d={left ? "M11 1V10L3 5.5Z" : "M2 1V10L10 5.5Z"} fill={color} />
    {bar && <path d="M1 1V10" stroke={color} strokeWidth="1.4" />}
  </svg>
);

/* ---------- data ---------- */

const contactLines = [
  "Email: gustavo@teorema.inf.br",
  "Telefone: (42) 3623-2064",
  "Celular:",
  "Inscrição Estadual: 40108043-08",
  "Documento: 00.451.738/0001-75",
  "Tipo: J",
  "Linha: TEOREMA",
];

const addressLines = [
  "Endereço: RUA PRESIDENTE GETULIO VARGAS",
  "CEP: 85.010-280",
  "Complemento: 0042405",
  "Cidade: GUARAPUAVA",
  "Estado: PARANÁ",
  "Bairro: CENTRO",
  "Número: 2034",
];

const pageTabs = ["Cadastro", "Configuração", "Contatos", "Endereço de Entrega", "Conta Corrente", "Financeiro"];

const sections = [
  {
    title: "Endereço Principal",
    h: 19,
    pad: 2,
    rows: [
      [
        { label: "Endereço", w: 448, value: "RUA PRESIDENTE GETULIO VARGAS", spread: "tight" },
        { label: "Número", w: 46, ml: 12, value: "2034" },
        { label: "Complemento", w: 226, ml: 14, value: "0042405" },
        { label: "C.E.P.", w: 73, ml: 14, value: "85010-280" },
        { kind: "button", icon: <LinkLoupe />, w: 23, ml: 5 },
      ],
      [
        { label: "Bairro", w: 226, value: "CENTRO" },
        { label: "Próximo", w: 338, ml: 14 },
      ],
      [
        { label: "Município", w: 34, value: "4067" },
        { kind: "button", icon: <Loupe />, w: 23, ml: 6, h: 23 },
        { kind: "combo", w: 318, ml: 10, value: "GUARAPUAVA", spread: "wide" },
        { label: "U.F.", kind: "combo", w: 43, ml: 9, value: "PR", off: true },
        { label: "Telefone", w: 128, ml: 17, value: "4236232064" },
        { kind: "combo", w: 127, ml: 9 },
      ],
      [
        { label: "Telefone Empresa", w: 128 },
        { kind: "combo", w: 128, ml: 11 },
        { label: "Telefone Celular", w: 128, ml: 13 },
        { kind: "combo", w: 128, ml: 4 },
        { label: "Fax", w: 128, ml: 20 },
        { label: "Latitude", kind: "combo", w: 87, ml: 12, value: "-25,3915", right: true },
        { label: "Longitude", kind: "combo", w: 84, ml: 23, value: "-51,47203", right: true },
        { kind: "button", icon: <MapsPin size={14} />, w: 22, ml: 5 },
      ],
    ],
  },
  {
    title: "Pessoa Jurídica",
    pad: 2,
    rows: [
      [
        { label: "Nome Fantasia", w: 448, value: "SO AUTO ACESSORIOS", spread: "tight" },
        { label: "Data Fundação", kind: "combo", w: 90, ml: 12, value: "/ /", indent: 6 },
        { label: "CNAE", w: 64, ml: 30 },
        { label: "Capital Social", kind: "combo", w: 90, ml: 16 },
        { label: "Insc. Municipal", w: 108, ml: 20 },
      ],
      [
        { label: "I.E. Subst. Trib.", w: 108 },
        { label: "Indicador I.E.", kind: "combo", w: 131, ml: 12, h: 18 },
        { label: "Inscr. Suframa", w: 108, ml: 9 },
        { label: "Vencimento Suframa", kind: "combo", w: 108, ml: 12, value: "/ /", indent: 6 },
        { label: "Responsável", w: 298, ml: 12 },
      ],
      [{ label: "Ramo de Atividade", w: 298, value: "ACESSORIOS AUTOMOVIES", spread: "tight" }],
    ],
  },
  {
    title: "Datas",
    pad: 5,
    rows: [
      [
        { label: "Data de Cadastro", kind: "combo", w: 98, value: "09/04/2019" },
        { label: "Data Ultima Alteração", kind: "combo", w: 98, ml: 42, value: "28/05/2020", off: true, black: true },
        { label: "Vencto do Cadastro", kind: "combo", w: 98, ml: 42, value: "/ /", indent: 6 },
        { label: "Data Geração Curva ABC", kind: "combo", w: 90, ml: 42, value: "/ /", indent: 6 },
        { label: "Curva ABC", w: 35, ml: 50, value: "B" },
        { label: "Controle", w: 90, ml: 45, value: "SUP" },
        { label: "Integração", kind: "combo", w: 102, ml: 30, value: "Nenhum" },
      ],
      [{ label: "Convênio Dia do Vencimento", kind: "spin", w: 66, value: "0" }],
    ],
  },
  {
    title: "Endereço de Cobrança Alternativo",
    pad: 0,
    rows: [
      [
        { label: "Endereço com No.", w: 448 },
        { label: "Complemento", w: 226, ml: 12 },
        { label: "C.E.P.", w: 59, ml: 14 },
      ],
      [
        { label: "Bairro", w: 226 },
        { label: "Próximo", w: 178, ml: 14 },
        { label: "Município", w: 34, ml: 12 },
        { kind: "button", icon: <Loupe />, w: 22, ml: 6 },
        { kind: "combo", w: 318, ml: 11 },
        { label: "U.F.", kind: "combo", w: 43, ml: 9, off: true },
      ],
      [{ label: "Praça Pagamento", w: 298 }],
    ],
  },
  {
    title: "Dados de Contato",
    pad: 0,
    rows: [
      [
        { label: "e-Mail", w: 409, value: "gustavo@teorema.inf.br", spread: "wide" },
        { kind: "button", icon: <BlueMail />, w: 24, ml: 2 },
        { label: "e-Mail (Doc-e)", w: 409, ml: 5 },
        { kind: "button", icon: <BlueMail />, w: 24, ml: 2 },
      ],
      [
        { label: "Skype", w: 216 },
        { label: "Home Page", w: 300, ml: 5 },
      ],
    ],
  },
];

const formTabs = [
  { n: "1", text: "Cadastro", w: 61, active: true },
  { n: "2", text: "Agrupamento", w: 81 },
  { n: "3", text: "Pessoa Física", w: 85, off: true },
  { n: "4", text: "Rotas, Dados Adicionais", w: 135 },
  { n: "5", text: "Obs. Ref., Limite de Crédito", w: 148 },
  { n: "6", text: "Relacionamentos", w: 101 },
  { n: "0", text: "Históricos", w: 70, last: true },
];

const actions = [
  { key: "R", rest: "etornar", w: 65, icon: <Retornar /> },
  { key: "I", rest: "ncluir", w: 60, icon: <Incluir /> },
  { key: "E", rest: "xcluir", w: 56, icon: <Excluir /> },
  { key: "C", rest: "onsulta", w: 70, icon: <Consulta /> },
  { key: "", rest: "Google Maps", w: 84, icon: <MapsPin size={17} /> },
  { key: "V", rest: "alidar", w: 108, icon: <Validar /> },
  { key: "S", rest: "alvar", w: 28, icon: <Salvar />, off: true },
  { key: "", rest: "Cancelar", w: 104, icon: <Cancelar />, off: true },
];

const menus = [
  { pre: "", key: "C", rest: "adastros", w: 59 },
  { pre: "C.", key: "R", rest: ".M.", w: 45 },
  { pre: "Consu", key: "l", rest: "tas", w: 58 },
  { pre: "", key: "R", rest: "elatórios", w: 59 },
  { pre: "", key: "U", rest: "tilitários", w: 59 },
  { pre: "A", key: "j", rest: "uda", w: 40 },
  { pre: "", key: "J", rest: "anelas", w: 50 },
];

const files = [
  { icon: <FileGear />, name: "elgin", date: "15/05/2020 08:10", type: "Parâmetros de confi...", size: "1 KB" },
  { icon: <Swoosh size={16} />, name: "especifico", date: "13/02/2023 08:59", type: "Aplicativo", size: "16.353 KB" },
  { icon: <Swoosh size={16} />, name: "especifico11-07", date: "11/07/2022 08:50", type: "Aplicativo", size: "15.850 KB" },
];

/* ---------- form pieces ---------- */

const FormField = ({ f }) => {
  if (f.kind === "button") {
    return (
      <Field $w={f.w} $ml={f.ml}>
        <FieldLabel />
        <IconButton $h={f.h}>{f.icon}</IconButton>
      </Field>
    );
  }
  return (
    <Field $w={f.w} $ml={f.ml}>
      <FieldLabel>{f.label}</FieldLabel>
      <InputBox $h={f.h} $off={f.off} $muted={f.off && !f.black} $spread={f.spread}>
        <InputText $right={f.right} $indent={f.indent}>
          {f.value}
        </InputText>
        {f.kind === "combo" && <DropArrow $flat={f.off} $grey={f.off && !f.black} />}
        {f.kind === "spin" && (
          <Spinner>
            <SpinPart $up />
            <SpinPart />
          </Spinner>
        )}
      </InputBox>
    </Field>
  );
};

const App = () => (
  <>
    <GlobalStyle />
    <Desktop>
      <ChromeBar>
        <ChromeRow>
          <NavSlot>
            <MdArrowBack />
          </NavSlot>
          <NavSlot $dim>
            <MdArrowForward />
          </NavSlot>
          <NavSlot>
            <MdRefresh />
          </NavSlot>
          <UrlPill>
            <MdLock />
            vendorflutter.teorema.inf.br<span>/clientes</span>
          </UrlPill>
          <ChromeEnd>
            <Avatar />
            <MdMoreVert />
          </ChromeEnd>
        </ChromeRow>
        <Bookmarks>
          <Bookmark $w={71}>
            <Gmail />
            Gmail
          </Bookmark>
          <Bookmark $w={86}>
            <YouTube />
            YouTube
          </Bookmark>
          <Bookmark $w={60}>
            <MapsPin size={18} />
            Maps
          </Bookmark>
        </Bookmarks>
      </ChromeBar>
      <AppBar>
        <BackIcon />
        <AppTitle>Clientes</AppTitle>
        <AppMenu />
      </AppBar>
      <UuidBox>UUID: 7eeb133d-b31f-4f05-8b18-d9bfe50e5250</UuidBox>
      <TabBar>
        {pageTabs.map((t, i) => (
          <Tab key={t} $active={i === 0}>
            {t}
          </Tab>
        ))}
      </TabBar>
      <Card>
        <Rule $top={0} $bottom={16} />
        {contactLines.map((l) => (
          <InfoLine key={l}>{l}</InfoLine>
        ))}
        <ActionRow>
          <ActionButton>
            <MdPhone />
          </ActionButton>
          <ActionButton>
            <MdMessage />
          </ActionButton>
          <ActionButton>
            <MdEmail />
          </ActionButton>
        </ActionRow>
        <Rule $top={22} $bottom={15} />
        {addressLines.map((l) => (
          <InfoLine key={l}>{l}</InfoLine>
        ))}
        <Highlight>
          <InfoLine>Latitude: -25.3914969</InfoLine>
          <InfoLine>Longitude: -51.4720297</InfoLine>
        </Highlight>
        <ActionRow>
          <ActionButton>
            <MdPlace />
          </ActionButton>
        </ActionRow>
        <Rule $top={12} $bottom={16} />
        <InfoLine>Observação Extra:</InfoLine>
        <Rule $top={6} $bottom={14} />
        <InfoLine>Criado em: 09/04/2019 17:51</InfoLine>
      </Card>
      <TeamTab>
        <TeamSquare>
          <svg width="17" height="17" viewBox="0 0 17 17">
            <circle cx="8.5" cy="8.5" r="8" fill="#fff" />
            <path d="M2.5 8.5L6 5.5V7.5H11V5.5L14.5 8.5L11 11.5V9.5H6V11.5Z" fill="#0e8ee9" />
          </svg>
        </TeamSquare>
      </TeamTab>

      <Explorer>
        <ExplorerMain>
          <ExplorerBands>
            <BandLine $c="#fff" $top={10} />
            <BandLine $c="#888" $top={5} />
            <BandLine $c="#fff" $top={19} />
            <BandLine $c="#888" $top={5} />
            <BandLine $c="#fff" $top={30} />
          </ExplorerBands>
          <ExplorerBody>
            <ExplorerPane />
            <FileList>
              {files.map((f) => (
                <FileRow key={f.name}>
                  <FileName>
                    <FileIcon>{f.icon}</FileIcon>
                    {f.name}
                  </FileName>
                  <FileDate>{f.date}</FileDate>
                  <FileType>{f.type}</FileType>
                  <FileSize>{f.size}</FileSize>
                </FileRow>
              ))}
            </FileList>
          </ExplorerBody>
          <ExplorerHScroll />
          <ExplorerGap>
            <CutPage />
          </ExplorerGap>
          <BrowserHScroll>
            <MdKeyboardArrowLeft />
            <HThumb />
            <HSpacer />
            <MdKeyboardArrowRight />
          </BrowserHScroll>
        </ExplorerMain>
        <ExplorerVScroll>
          <MdKeyboardArrowUp />
          <VThumb />
          <MdKeyboardArrowDown />
        </ExplorerVScroll>
      </Explorer>

      <CrmWindow>
        <TitleBar $h={18} $size={11.5} $right={3}>
          <CrmLogo />
          C.R.M.
          <TitleSpacer />
          <CaptionButton><MinGlyph /></CaptionButton>
          <CaptionButton><MaxGlyph /></CaptionButton>
          <CaptionButton>X</CaptionButton>
        </TitleBar>
        <CrmHeader>
          <BarsColumn>
            <MenuBar>
              {menus.map((m) => (
                <MenuItem key={m.rest} $w={m.w}>
                  {m.pre}
                  <u>{m.key}</u>
                  {m.rest}
                </MenuItem>
              ))}
            </MenuBar>
            <ToolStrip>
              <ToolGroup $w={140} $pad={9} $grip>
                <ToolSlot $w={23}><Building /></ToolSlot>
                <ToolSlot $w={24}><People /></ToolSlot>
                <ToolSlot $w={23}><ListWindow /></ToolSlot>
                <ToolSlot $w={24}><TreeIcon /></ToolSlot>
                <ToolSlot $w={10}><Caret /></ToolSlot>
                <ToolSlot $w={26}><GreyMail /></ToolSlot>
              </ToolGroup>
              <ToolGroup $w={137} $ml={4} $pad={11} $grip>
                <ToolSlot $w={20}><CardIcon /></ToolSlot>
                <ToolSlot $w={16}><Caret /></ToolSlot>
                <ToolSlot $w={20}><Printer /></ToolSlot>
                <ToolSlot $w={16}><Caret /></ToolSlot>
                <ToolSlot $w={20}><BlueDoc /></ToolSlot>
              </ToolGroup>
              <ToolGroup $w={168} $pad={5}>
                <ToolSlot $w={23}><CalendarBlue /></ToolSlot>
                <ToolSlot $w={23}><Calculator /></ToolSlot>
                <ToolSlot $w={23}><CalendarDay /></ToolSlot>
                <ToolSlot $w={23}><CalendarDay gear /></ToolSlot>
                <ToolSlot $w={22}><LockOrange /></ToolSlot>
                <ToolSlot $w={25}><RedBuilding /></ToolSlot>
              </ToolGroup>
              <ToolGroup $w={95} $pad={1}>
                <ToolSlot $w={24}><Star /></ToolSlot>
                <ToolSlot $w={14}><Caret /></ToolSlot>
                <ToolSlot $w={22}><InfoBlue /></ToolSlot>
                <ToolSlot $w={32}><PowerOrange /></ToolSlot>
              </ToolGroup>
            </ToolStrip>
          </BarsColumn>
          <UserArea>
            <BellBadge />
            <RingSlot>
              <UserRing />
            </RingSlot>
            <Mestre>MESTRE</Mestre>
          </UserArea>
        </CrmHeader>

        <InnerWindow>
          <TitleBar $h={18} $size={11.8} $right={3}>
            <DocPen />
            Cadastro de Clientes, Fornecedores e Transportadores
            <TitleSpacer />
            <CaptionButton>X</CaptionButton>
          </TitleBar>
          <ActionBar>
            {actions.map((a) => (
              <ActionItem key={a.rest} $w={a.w} $off={a.off}>
                <ActionIcon>{a.icon}</ActionIcon>
                <div>
                  <u>{a.key}</u>
                  {a.rest}
                </div>
              </ActionItem>
            ))}
          </ActionBar>
          <HeadRow>
            <Field $w={78}>
              <FieldLabel>Código</FieldLabel>
              <CodeValue>0042405</CodeValue>
            </Field>
            <Field $w={448}>
              <FieldLabel>Nome</FieldLabel>
              <InputBox $spread="tight">
                <InputText>ACESSORIOS 1526 AUTOMOVIES 00.45 CENTRO DIALETO X</InputText>
              </InputBox>
            </Field>
            <Field $w={130} $ml={16}>
              <PersonLabel>Pessoa</PersonLabel>
              <RadioRow>
                <Radio $w={62}>Física</Radio>
                <Radio $w={62} $on>Jurídica</Radio>
              </RadioRow>
            </Field>
            <Field $w={138}>
              <FieldLabel>C.N.P.J.</FieldLabel>
              <InputBox $spread="wide">
                <InputText>00.451.738/0001-75</InputText>
              </InputBox>
            </Field>
            <Field $w={23} $ml={5}>
              <FieldLabel />
              <IconButton $h={24} $top={-2}>
                <LinkLoupe />
              </IconButton>
            </Field>
            <Field $w={120} $ml={5}>
              <FieldLabel>Inscrição Estadual</FieldLabel>
              <InputBox>
                <InputText>40108043-08</InputText>
              </InputBox>
            </Field>
            <Field $w={30} $ml={10}>
              <FieldLabel $clip>Situação</FieldLabel>
              <StatusText>Ativo</StatusText>
            </Field>
          </HeadRow>
          <TabStrip>
            {formTabs.map((t) => (
              <FormTab key={t.n} $w={t.w} $active={t.active} $off={t.off} $last={t.last}>
                <u>{t.n}</u>
                &nbsp;{t.text}
              </FormTab>
            ))}
          </TabStrip>
          <FormArea>
            <FormScroll>
              {sections.map((s) => (
                <React.Fragment key={s.title}>
                  <SectionBand $h={s.h} $pad={s.pad}>
                    {s.title}
                  </SectionBand>
                  {s.rows.map((row, i) => (
                    <FormRow key={i}>
                      {row.map((f, j) => (
                        <FormField key={j} f={f} />
                      ))}
                    </FormRow>
                  ))}
                </React.Fragment>
              ))}
            </FormScroll>
            <VScroll>
              <VScrollButton $up />
              <VScrollThumb />
              <VScrollButton />
            </VScroll>
          </FormArea>
          <RecordBar>
            <RecordCell $w={28} $raised><MailFlat /></RecordCell>
            <RecordCell $w={22} $ml={3} $raised $bold $size={12}>Aa</RecordCell>
            <RecordCell $w={81} $ml={4} $bold $color="#888" $size={12}>Consulta</RecordCell>
            <RecordCell $w={107} $ml={2} />
            <RecordName $w={418} $ml={2} $bold $color="#0a246a" $size={12}>
              0042405 - ACESSORIOS 1526 AUTOMOVIES 00.45 CENTRO DIALETO X
            </RecordName>
            <RecordCell $w={70} $ml={3} $raised $color="#808000">Código</RecordCell>
            <RecordCell $w={26} $ml={3}>ABC</RecordCell>
            <RecordCell $w={26} $ml={3}>0...9</RecordCell>
            <RecordCell $w={28} $ml={3} $color="#999">INS</RecordCell>
            <RecordCell $w={101} $ml={3} $bold $size={12}>0 Registros</RecordCell>
            <RecordCell $w={76} $ml={3}>
              <NavGlyph><Triangle left bar color="#999" /></NavGlyph>
              <NavGlyph><Triangle left color="#999" /></NavGlyph>
              <NavGlyph><Triangle /></NavGlyph>
              <NavGlyph><Triangle bar /></NavGlyph>
            </RecordCell>
          </RecordBar>
        </InnerWindow>
        <FootBar>
          <FootCell $w={134}>6/3/2023 Mar/2023</FootCell>
          <SocialSlot><Swoosh size={16} /></SocialSlot>
          <SocialSlot>@</SocialSlot>
          <SocialSlot><FaInstagram /></SocialSlot>
          <SocialSlot><FaLinkedinIn /></SocialSlot>
          <SocialSlot><FaYoutube /></SocialSlot>
          <SocialSlot><FaTwitter /></SocialSlot>
          <SocialSlot><FaFacebookSquare /></SocialSlot>
          <SocialSlot><Swoosh size={15} /></SocialSlot>
          <SocialSlot><Swoosh size={18} /></SocialSlot>
          <FootCell $w={101}>
            <TeoremaLink>Teorema Sistemas</TeoremaLink>
          </FootCell>
          <FootCell $w={214} $flat>C.R.M. - v.22.07a01.30a</FootCell>
          <FootCell $w={350} $align="flex-end">0001 NOME DA EMI</FootCell>
        </FootBar>
      </CrmWindow>

      <Annotation width="1920" height="1003" viewBox="0 0 1920 1003">
        <rect x="1383" y="354" width="240" height="53" fill="none" stroke="#fff200" strokeWidth="4" rx="1" />
        <path
          d="M188 821L676 790C850 778 1020 766 1150 750C1257 735 1330 705 1371 660C1405 620 1436 530 1481 428"
          fill="none"
          stroke="#fff200"
          strokeWidth="6"
        />
        <path d="M1491 405L1468 432L1492 438Z" fill="#fff200" />
      </Annotation>
    </Desktop>
  </>
);

export default App;
